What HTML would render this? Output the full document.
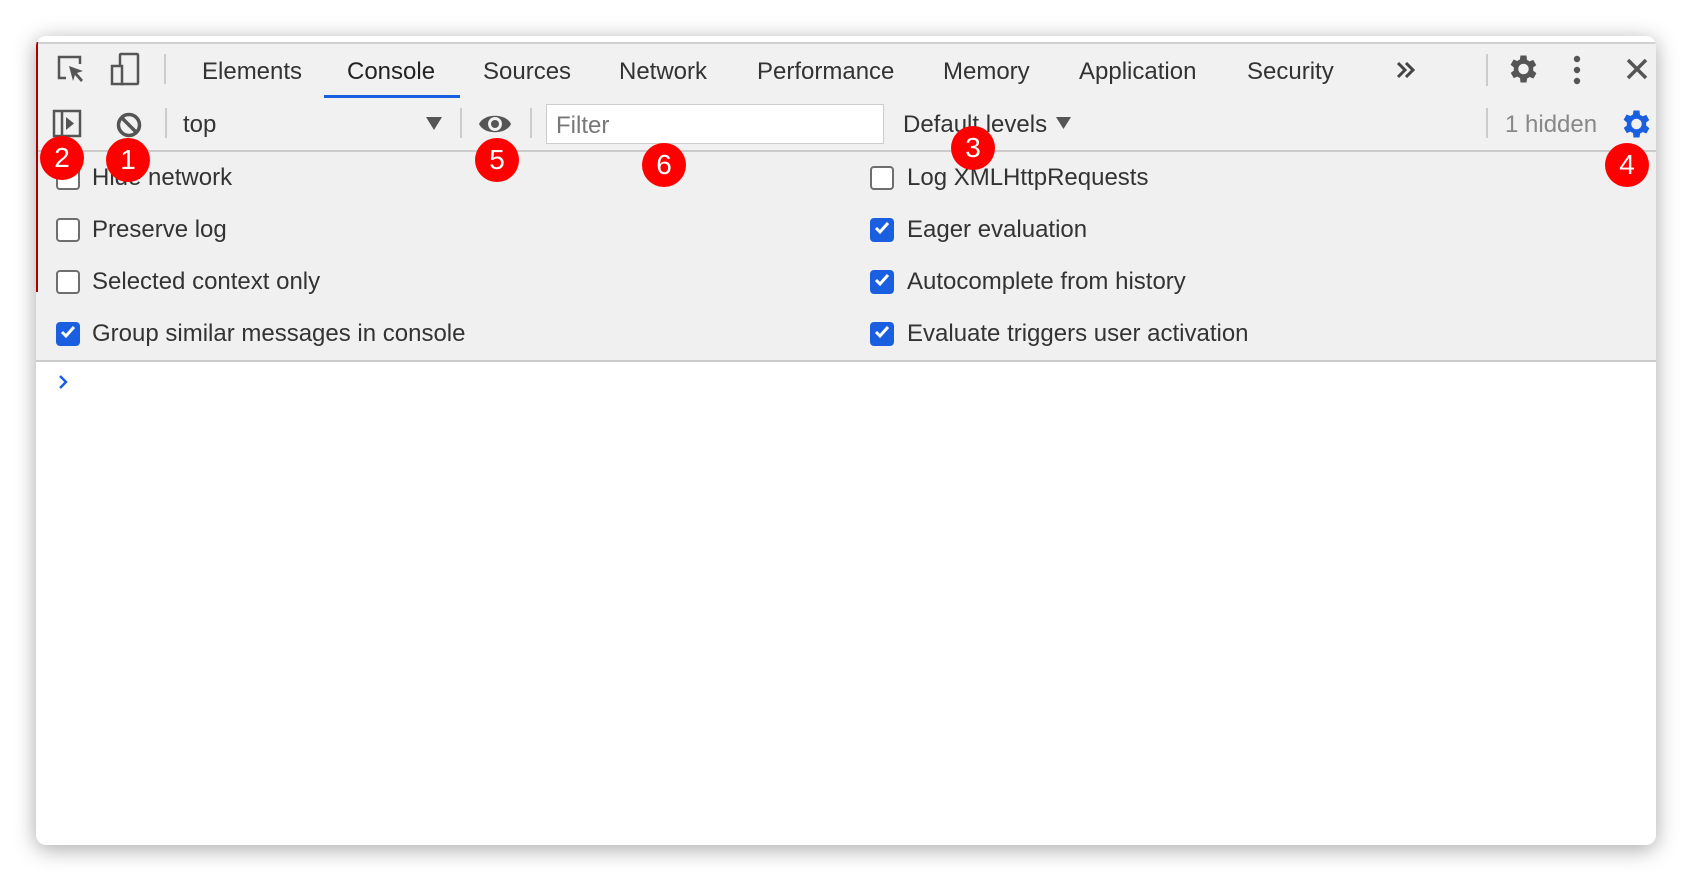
<!DOCTYPE html><html><head><style>
body{margin:0;width:1692px;height:882px;background:#fff;position:relative;overflow:hidden;font-family:"Liberation Sans",Arial,sans-serif;}
.win{position:absolute;left:36px;top:36px;width:1620px;height:809px;background:#fff;border-radius:10px;box-shadow:0 4px 22px rgba(0,0,0,.35);overflow:hidden}
.a{position:absolute}
.t{position:absolute;font-size:24px;color:#333;top:0;line-height:24px}
.sep{position:absolute;width:2px;background:#ccc}
.cb{position:absolute;width:20px;height:20px;border:2px solid #6e6e6e;border-radius:4px;background:#fff}
.cb.on{background:#1a5fe0;border-color:#1a5fe0}
.lbl{position:absolute;font-size:24px;color:#333;line-height:24px}
.b{position:absolute;width:44px;height:44px;border-radius:50%;background:#f00;color:#fff;font-size:28px;text-align:center;line-height:44px}
</style></head><body>
<div class="win">
 <div class="a" style="left:0;top:6px;width:1620px;height:55px;background:#f1f1f1;border-top:2px solid #d0d0d0;border-bottom:2px solid #cbcbcb"></div>
 <div class="a" style="left:0;top:63px;width:1620px;height:51px;background:#f1f1f1;border-bottom:2px solid #cbcbcb"></div>
 <div class="a" style="left:0;top:116px;width:1620px;height:208px;background:#f0f0f0;border-bottom:2px solid #cbcbcb"></div>
 <div class="a" style="left:0;top:6px;width:2px;height:250px;background:#a00"></div>
 <svg class="a" style="left:20px;top:18px" width="32" height="32" viewBox="0 0 32 32" fill="none" stroke="#555" stroke-width="2.5"><path d="M10 24H3V3h21v7"/><path d="M13 12l14 5-6 2 6 7-2 2-6-7-2 6z" fill="#555" stroke="none"/></svg>
 <svg class="a" style="left:74px;top:16px" width="32" height="34" viewBox="0 0 32 34" fill="none" stroke="#555" stroke-width="2.5"><rect x="10" y="2" width="18" height="30" rx="1"/><rect x="2" y="14" width="10" height="18" fill="#f1f1f1"/></svg>
 <div class="sep" style="left:128px;top:18px;height:30px"></div>
 <div class="a" style="top:24px;left:0;width:1620px;height:30px">
  <span class="t" style="left:166px">Elements</span>
  <span class="t" style="left:311px;color:#222">Console</span>
  <span class="t" style="left:447px">Sources</span>
  <span class="t" style="left:583px">Network</span>
  <span class="t" style="left:721px">Performance</span>
  <span class="t" style="left:907px">Memory</span>
  <span class="t" style="left:1043px">Application</span>
  <span class="t" style="left:1211px">Security</span>
 </div>
 <svg class="a" style="left:1360px;top:25px" width="20" height="18" fill="none" stroke="#444" stroke-width="3"><path d="M2 2l7 7-7 7M10 2l7 7-7 7"/></svg>
 <div class="a" style="left:288px;top:59px;width:136px;height:3px;background:#1a5fe0"></div>
 <div class="sep" style="left:1450px;top:18px;height:32px"></div>
 <svg class="a" style="left:1468px;top:15px" width="36" height="36" viewBox="0 0 24 24"><path fill="#555" d="M19.4 13a7.5 7.5 0 000-2l2.1-1.6-2-3.5-2.5 1a7 7 0 00-1.7-1L15 3h-4l-.4 2.7a7 7 0 00-1.7 1l-2.5-1-2 3.5L6.6 11a7.5 7.5 0 000 2l-2.1 1.6 2 3.5 2.5-1a7 7 0 001.7 1L11 21h4l.4-2.7a7 7 0 001.7-1l2.5 1 2-3.5zM13 15.5a3.5 3.5 0 110-7 3.5 3.5 0 010 7z"/></svg>
 <svg class="a" style="left:1536px;top:18px" width="10" height="32"><circle cx="5" cy="5" r="3.2" fill="#555"/><circle cx="5" cy="16" r="3.2" fill="#555"/><circle cx="5" cy="27" r="3.2" fill="#555"/></svg>
 <svg class="a" style="left:1590px;top:22px" width="22" height="22" stroke="#555" stroke-width="3.5"><path d="M2 2l18 18M20 2L2 20"/></svg>
 <svg class="a" style="left:16px;top:73px" width="30" height="30" fill="none" stroke="#555" stroke-width="2.5"><rect x="2" y="2" width="26" height="25"/><path d="M10 2v25"/><path d="M14 8l8 6.5-8 6.5z" fill="#555" stroke="none"/></svg>
 <svg class="a" style="left:79px;top:75px" width="28" height="28" fill="none" stroke="#555" stroke-width="3.5"><circle cx="14" cy="14" r="10.5"/><path d="M7 7l14 14"/></svg>
 <div class="sep" style="left:129px;top:72px;height:30px"></div>
 <span class="t" style="left:147px;top:77px">top</span>
 <svg class="a" style="left:390px;top:81px" width="16" height="14"><path d="M0 0h16L8 13z" fill="#555"/></svg>
 <div class="sep" style="left:424px;top:72px;height:30px"></div>
 <svg class="a" style="left:442px;top:75px" width="34" height="26"><path d="M1 13C6 2 28 2 33 13 28 24 6 24 1 13z" fill="#555"/><circle cx="17" cy="13" r="7" fill="#f1f1f1"/><circle cx="17" cy="13" r="4" fill="#555"/></svg>
 <div class="sep" style="left:494px;top:72px;height:30px"></div>
 <div class="a" style="left:510px;top:68px;width:336px;height:38px;background:#fff;border:1px solid #ccc;"></div>
 <span class="t" style="left:520px;top:78px;color:#777">Filter</span>
 <span class="t" style="left:867px;top:77px">Default levels</span>
 <svg class="a" style="left:1020px;top:81px" width="15" height="13"><path d="M0 0h15L7.5 12z" fill="#555"/></svg>
 <div class="sep" style="left:1450px;top:72px;height:30px"></div>
 <span class="t" style="left:1469px;top:77px;color:#888">1 hidden</span>
 <svg class="a" style="left:1581px;top:70px" width="36" height="36" viewBox="0 0 24 24"><path fill="#1a5fe0" d="M19.4 13a7.5 7.5 0 000-2l2.1-1.6-2-3.5-2.5 1a7 7 0 00-1.7-1L15 3h-4l-.4 2.7a7 7 0 00-1.7 1l-2.5-1-2 3.5L6.6 11a7.5 7.5 0 000 2l-2.1 1.6 2 3.5 2.5-1a7 7 0 001.7 1L11 21h4l.4-2.7a7 7 0 001.7-1l2.5 1 2-3.5zM13 15.5a3.5 3.5 0 110-7 3.5 3.5 0 010 7z"/></svg>
 <div class="cb" style="left:20px;top:130px"></div><span class="lbl" style="left:56px;top:130px">Hide network</span>
 <div class="cb" style="left:20px;top:182px"></div><span class="lbl" style="left:56px;top:182px">Preserve log</span>
 <div class="cb" style="left:20px;top:234px"></div><span class="lbl" style="left:56px;top:234px">Selected context only</span>
 <div class="cb on" style="left:20px;top:286px"></div><span class="lbl" style="left:56px;top:286px">Group similar messages in console</span>
 <div class="cb" style="left:834px;top:130px"></div><span class="lbl" style="left:871px;top:130px">Log XMLHttpRequests</span>
 <div class="cb on" style="left:834px;top:182px"></div><span class="lbl" style="left:871px;top:182px">Eager evaluation</span>
 <div class="cb on" style="left:834px;top:234px"></div><span class="lbl" style="left:871px;top:234px">Autocomplete from history</span>
 <div class="cb on" style="left:834px;top:286px"></div><span class="lbl" style="left:871px;top:286px">Evaluate triggers user activation</span>
 <svg class="a" style="left:22px;top:286px" width="20" height="20"><path d="M4 10l4 4 8-9" stroke="#fff" stroke-width="3" fill="none"/></svg>
 <svg class="a" style="left:836px;top:182px" width="20" height="20"><path d="M4 10l4 4 8-9" stroke="#fff" stroke-width="3" fill="none"/></svg>
 <svg class="a" style="left:836px;top:234px" width="20" height="20"><path d="M4 10l4 4 8-9" stroke="#fff" stroke-width="3" fill="none"/></svg>
 <svg class="a" style="left:836px;top:286px" width="20" height="20"><path d="M4 10l4 4 8-9" stroke="#fff" stroke-width="3" fill="none"/></svg>
 <svg class="a" style="left:22px;top:338px" width="12" height="16"><path d="M2 2l6 6-6 6" stroke="#1a5fe0" stroke-width="2.5" fill="none"/></svg>
</div>
<div class="b" style="left:40px;top:136px">2</div>
<div class="b" style="left:106px;top:138px">1</div>
<div class="b" style="left:475px;top:138px">5</div>
<div class="b" style="left:642px;top:143px">6</div>
<div class="b" style="left:951px;top:126px">3</div>
<div class="b" style="left:1605px;top:143px">4</div>
</body></html>
